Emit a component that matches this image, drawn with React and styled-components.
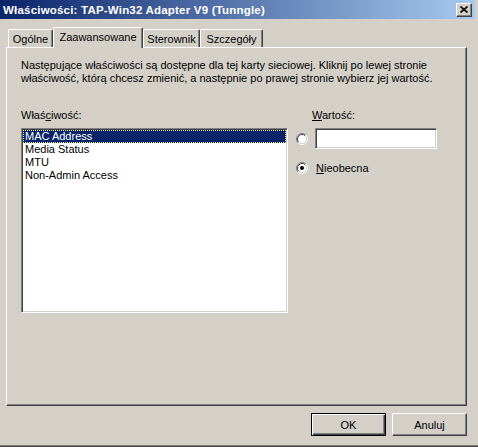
import React from 'react';
import styled, { createGlobalStyle } from 'styled-components';

const GlobalStyle = createGlobalStyle`
  html, body {
    margin: 0;
    padding: 0;
    background: #d4d0c8;
  }
  body {
    font-family: "Liberation Sans", Arial, sans-serif;
    font-size: 11px;
    color: #000;
    overflow: hidden;
  }
`;

const properties = ['MAC Address', 'Media Status', 'MTU', 'Non-Admin Access'];

const tabs = [
  { label: 'Ogólne', width: 45 },
  { label: 'Zaawansowane', width: 90, active: true },
  { label: 'Sterownik', width: 57 },
  { label: 'Szczegóły', width: 63 },
];

const Radio = ({ checked }) => (
  <RadioBox>
    <svg width="12" height="12" viewBox="0 0 12 12">
      <circle cx="6" cy="6" r="5" fill="#fff" />
      <path d="M2.11 9.89 A5.5 5.5 0 0 1 9.89 2.11" fill="none" stroke="#808080" />
      <path d="M2.82 9.18 A4.5 4.5 0 0 1 9.18 2.82" fill="none" stroke="#404040" />
      <path d="M9.89 2.11 A5.5 5.5 0 0 1 2.11 9.89" fill="none" stroke="#fff" />
      <path d="M9.18 2.82 A4.5 4.5 0 0 1 2.82 9.18" fill="none" stroke="#d4d0c8" />
      {checked ? <circle cx="6" cy="6" r="2" fill="#000" /> : null}
    </svg>
  </RadioBox>
);

export default function App() {
  return (
    <Window>
      <GlobalStyle />
      <TitleBar>
        <Title>Właściwości: TAP-Win32 Adapter V9 (Tunngle)</Title>
        <CloseButton>
          <svg width="8" height="7" viewBox="0 0 8 7">
            <path d="M0.5 0.5 L7.5 6.5 M7.5 0.5 L0.5 6.5" stroke="#000" strokeWidth="1.6" />
          </svg>
        </CloseButton>
      </TitleBar>

      <Body>
        <TabStrip>
          {tabs.map(tab => (
            <Tab key={tab.label} $width={tab.width} $active={tab.active}>
              {tab.label}
            </Tab>
          ))}
        </TabStrip>

        <Panel>
          <Intro>
            Następujące właściwości są dostępne dla tej karty sieciowej. Kliknij po lewej stronie
            <br />
            właściwość, którą chcesz zmienić, a następnie po prawej stronie wybierz jej wartość.
          </Intro>

          <Columns>
            <LeftColumn>
              <Label>Właś<u>c</u>iwość:</Label>
              <ListBox>
                {properties.map((item, i) => (
                  <ListItem key={item} $selected={i === 0}>{item}</ListItem>
                ))}
              </ListBox>
            </LeftColumn>

            <RightColumn>
              <Label $indent>
                <u>W</u>artość:
              </Label>
              <ValueRow>
                <Radio />
                <TextInput />
              </ValueRow>
              <OptionRow>
                <Radio checked />
                <OptionText><u>N</u>ieobecna</OptionText>
              </OptionRow>
            </RightColumn>
          </Columns>
        </Panel>

        <Footer>
          <Button $default>OK</Button>
          <Button>Anuluj</Button>
        </Footer>
      </Body>
    </Window>
  );
}

const Window = styled.div`
  width: 478px;
  height: 447px;
  box-sizing: border-box;
  display: flex;
  flex-direction: column;
  padding-right: 3px;
  border-bottom: 1px solid #404040;
  box-shadow: inset 0 -1px #808080;
`;

const TitleBar = styled.div`
  height: 19px;
  display: flex;
  align-items: center;
  justify-content: space-between;
  padding: 0 3px 0 3px;
  background: linear-gradient(to right, #0a246a, #a6caf0);
`;

const Title = styled.span`
  color: #fff;
  font-weight: bold;
  font-size: 11.5px;
  letter-spacing: 0.2px;
  white-space: nowrap;
`;

const CloseButton = styled.div`
  width: 16px;
  height: 14px;
  box-sizing: border-box;
  display: flex;
  align-items: center;
  justify-content: center;
  background: #d4d0c8;
  border: 1px solid;
  border-color: #fff #404040 #404040 #fff;
  box-shadow: inset -1px -1px #808080;
`;

const Body = styled.div`
  flex: 1;
  display: flex;
  flex-direction: column;
  padding: 0 8px 9px 6px;
`;

const TabStrip = styled.div`
  height: 28px;
  display: flex;
  align-items: flex-end;
  padding-left: 2px;
`;

const Tab = styled.div`
  position: relative;
  width: ${p => p.$width}px;
  height: ${p => (p.$active ? 21 : 18)}px;
  box-sizing: border-box;
  display: flex;
  align-items: center;
  justify-content: center;
  padding-bottom: ${p => (p.$active ? 2 : 0)}px;
  margin-bottom: ${p => (p.$active ? -1 : 0)}px;
  z-index: ${p => (p.$active ? 1 : 0)};
  background: #d4d0c8;
  border-top: 1px solid #fff;
  border-left: 1px solid #fff;
  border-right: 1px solid #404040;
  border-radius: 2px 2px 0 0;
  box-shadow: inset -1px 0 #808080;
  white-space: nowrap;
`;

const Panel = styled.div`
  height: 359px;
  box-sizing: border-box;
  padding: 11px 14px 0 14px;
  border-top: 1px solid #fff;
  border-left: 1px solid #fff;
  border-right: 1px solid #404040;
  border-bottom: 1px solid #404040;
  box-shadow: inset -1px -1px #808080;
`;

const Intro = styled.p`
  margin: 0;
  line-height: 13px;
  white-space: nowrap;
`;

const Columns = styled.div`
  display: flex;
  margin-top: 24px;
`;

const LeftColumn = styled.div`
  width: 267px;
  display: flex;
  flex-direction: column;
`;

const RightColumn = styled.div`
  margin-left: 8px;
  display: flex;
  flex-direction: column;
`;

const Label = styled.div`
  height: 13px;
  line-height: 13px;
  padding-left: ${p => (p.$indent ? 16 : 0)}px;
`;

const ListBox = styled.div`
  margin-top: 6px;
  height: 185px;
  box-sizing: border-box;
  background: #fff;
  border: 1px solid;
  border-color: #808080 #fff #fff #808080;
  box-shadow: inset 1px 1px #404040, inset -1px -1px #d4d0c8;
  padding: 1px;
`;

const ListItem = styled.div`
  height: 13px;
  line-height: 13px;
  padding-left: 2px;
  background: ${p => (p.$selected ? '#0a246a' : 'transparent')};
  color: ${p => (p.$selected ? '#fff' : '#000')};
  outline: ${p => (p.$selected ? '1px dotted #f0e68c' : 'none')};
  outline-offset: -1px;
`;

const RadioBox = styled.span`
  width: 12px;
  height: 12px;
  display: flex;
  flex: none;
`;

const ValueRow = styled.div`
  margin-top: 6px;
  display: flex;
  align-items: center;
  gap: 7px;
`;

const TextInput = styled.div`
  width: 122px;
  height: 21px;
  box-sizing: border-box;
  background: #fff;
  border: 1px solid;
  border-color: #808080 #fff #fff #808080;
  box-shadow: inset 1px 1px #404040, inset -1px -1px #d4d0c8;
`;

const OptionRow = styled.div`
  margin-top: 12px;
  height: 14px;
  display: flex;
  align-items: center;
  gap: 8px;
`;

const OptionText = styled.span`
  line-height: 13px;
`;

const Footer = styled.div`
  display: flex;
  justify-content: flex-end;
  gap: 6px;
  padding-top: 7px;
`;

const Button = styled.div`
  width: 75px;
  height: 23px;
  box-sizing: border-box;
  display: flex;
  align-items: center;
  justify-content: center;
  background: #d4d0c8;
  border: 1px solid;
  border-color: ${p => (p.$default ? '#000' : '#fff #404040 #404040 #fff')};
  box-shadow: ${p =>
    p.$default
      ? 'inset 1px 1px #fff, inset -1px -1px #404040, inset -2px -2px #808080'
      : 'inset -1px -1px #808080'};
`;
